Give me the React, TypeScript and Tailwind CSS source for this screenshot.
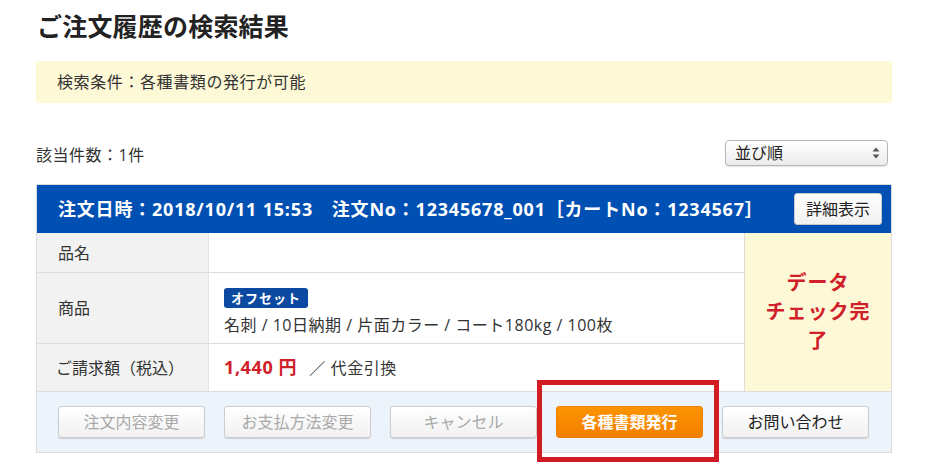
const font = { fontFamily: '"Open Sans", "Noto Sans CJK JP", sans-serif' };

function ActionButton({ label, disabled }: { label: string; disabled?: boolean }) {
  return (
    <button
      type="button"
      className={
        'h-[32px] w-[147px] rounded-[3px] border border-[#cdcdcd] bg-gradient-to-b from-white to-[#f1f1f1] text-[16px] shadow-[0_1px_1px_rgba(0,0,0,0.15)] ' +
        (disabled ? 'text-[#a9a9a9]' : 'text-[#222]')
      }
    >
      {label}
    </button>
  );
}

function SortArrows() {
  return (
    <svg width="8" height="12" viewBox="0 0 8 12" className="text-[#555]">
      <path d="M4 0.5 L7.5 4.5 H0.5 Z" fill="currentColor" />
      <path d="M4 11.5 L7.5 7.5 H0.5 Z" fill="currentColor" />
    </svg>
  );
}

export default function App() {
  return (
    <div className="min-h-[470px] bg-white text-[#333]" style={font}>
      <div className="w-[856px] ml-[36px] pt-[9px]">
        <h1 className="text-[25px] font-bold leading-[34px] text-[#222] pl-[1px] tracking-[0.2px]">ご注文履歴の検索結果</h1>

        <div className="mt-[18px] h-[42px] bg-[#fdf8d6] flex items-center pl-[21px] text-[16px] tracking-[0.6px] text-[#333]">
          検索条件：各種書類の発行が可能
        </div>

        <div className="mt-[37px] flex items-end justify-between">
          <div className="text-[16px] leading-[22px] tracking-[0.5px]">該当件数：1件</div>
          <div className="mr-[4px] flex h-[26px] w-[163px] items-center justify-between rounded-[4px] border border-[#b5b5b5] bg-gradient-to-b from-white to-[#ececec] pl-[9px] pr-[7px] text-[16px] text-[#222] shadow-[0_1px_1px_rgba(0,0,0,0.1)]">
            <span>並び順</span>
            <SortArrows />
          </div>
        </div>

        <div className="mt-[18px] border border-[#dcdcdc]">
          <div className="flex h-[48px] items-center justify-between bg-[#0050b4] pl-[21px] pr-[9px]">
            <div className="text-[18px] font-bold text-white tracking-[0.8px]">
              注文日時：2018/10/11 15:53　注文No：12345678_001［カートNo：1234567］
            </div>
            <button
              type="button"
              className="h-[32px] w-[88px] rounded-[3px] border border-[#c9c9c9] bg-gradient-to-b from-white to-[#f1f1f1] text-[16px] text-[#222]"
            >
              詳細表示
            </button>
          </div>

          <div className="flex">
            <div className="flex-1">
              <div className="flex h-[40px] border-b border-[#dcdcdc]">
                <div className="w-[172px] bg-[#f2f2f2] border-r border-[#e4e4e4] flex items-center pl-[21px] text-[16px]">品名</div>
                <div className="flex-1" />
              </div>
              <div className="flex h-[71px] border-b border-[#dcdcdc]">
                <div className="w-[172px] bg-[#f2f2f2] border-r border-[#e4e4e4] flex items-center pl-[21px] text-[16px]">商品</div>
                <div className="flex-1 pl-[15px] pt-[12px]">
                  <span className="inline-block rounded-[3px] bg-[#0b4aa0] px-[7px] h-[20px] leading-[20px] text-[13px] font-bold text-white tracking-[1px]">オフセット</span>
                  <div className="mt-[4px] text-[16px] leading-[24px] tracking-[0.5px] text-[#333]">名刺 / 10日納期 / 片面カラー / コート180kg / 100枚</div>
                </div>
              </div>
              <div className="flex h-[47px]">
                <div className="w-[172px] bg-[#f2f2f2] border-r border-[#e4e4e4] flex items-center pl-[19px] text-[16px]">ご請求額（税込）</div>
                <div className="flex-1 flex items-center pl-[15px] text-[16px]">
                  <span className="text-[18px] font-bold text-[#d0202a] tracking-[0.6px]">1,440 円</span>
                  <span className="ml-[12px] tracking-[0.6px]">／ 代金引換</span>
                </div>
              </div>
            </div>
            <div className="w-[147px] bg-[#fdf8d6] border-l border-[#dcdcdc] flex items-center justify-center text-center text-[20px] font-bold leading-[29px] tracking-[1px] text-[#d0202a]">
              <div className="w-[116px] mt-[-2px]">データ<br />チェック完<br />了</div>
            </div>
          </div>

          <div className="flex h-[61px] items-center gap-[19px] bg-[#edf3fa] border-t border-[#dcdcdc] pl-[21px]">
            <ActionButton label="注文内容変更" disabled />
            <ActionButton label="お支払方法変更" disabled />
            <ActionButton label="キャンセル" disabled />
            <div className="relative">
              <button
                type="button"
                className="h-[32px] w-[147px] rounded-[3px] border border-[#f08000] bg-gradient-to-b from-[#fb9300] to-[#f57f00] text-[16px] font-bold text-white"
              >
                各種書類発行
              </button>
              <div className="pointer-events-none absolute left-[-19px] top-[-26px] h-[82px] w-[182px] border-[5px] border-[#d21c24]" />
            </div>
            <ActionButton label="お問い合わせ" />
          </div>
        </div>
      </div>
    </div>
  );
}
